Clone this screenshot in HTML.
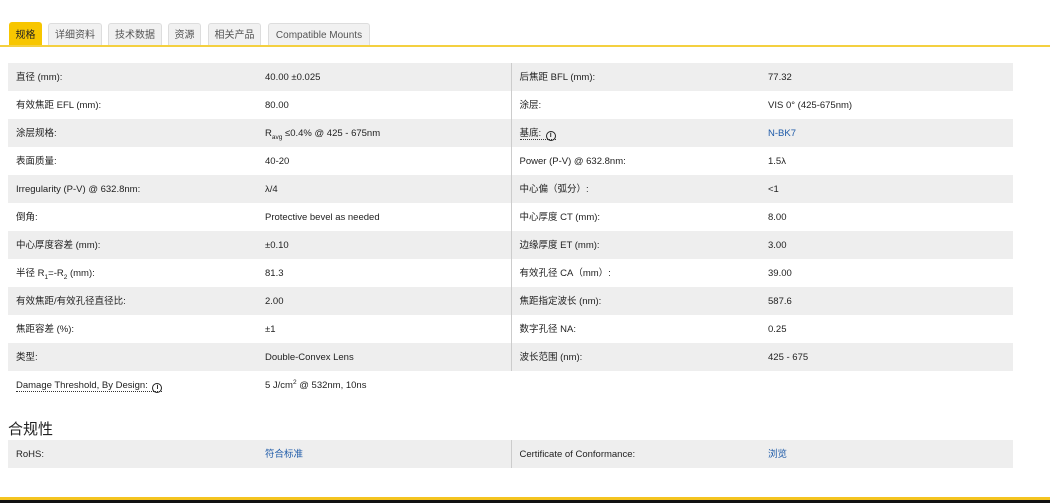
<!DOCTYPE html>
<html><head><meta charset="utf-8"><style>
*{margin:0;padding:0;box-sizing:border-box}
body{width:1050px;height:503px;background:#fff;font-family:"Liberation Sans","Noto Sans CJK SC",sans-serif;font-size:9.5px;color:#222;position:relative;overflow:hidden}
.tab{position:absolute;top:23px;height:23px;background:#f1f1f1;border:1px solid #ddd;border-bottom:none;border-radius:3px 3px 0 0;color:#555;font-size:10px;line-height:24px;text-align:center}
.tab.on{background:#f7c600;border-color:#f7c600;color:#222;top:22px;height:24px;line-height:25px}
.line{position:absolute;left:0;top:45px;width:1050px;height:2px;background:#f4d040}
table{position:absolute;left:8px;border-collapse:collapse;width:1005px;table-layout:fixed}
td{height:28px;padding-left:8px;padding-top:2px;vertical-align:middle;line-height:12px;white-space:nowrap}
tr.g td{background:#eee}
.c2{border-right:1px solid #ccc}
.lnk{color:#1d5aa8}
.u{border-bottom:1px dotted #333}
.i{display:inline-block;width:10px;height:10px;border:1.4px solid #222;border-radius:50%;font-size:7px;line-height:7px;text-align:center;font-weight:bold;vertical-align:-1px;margin-left:2px}
h3{position:absolute;left:8px;top:418px;font-size:15px;font-weight:normal;color:#222}
.bot{position:absolute;left:0;top:497px;width:1050px;height:3px;background:#f4c420}
.blk{position:absolute;left:0;top:500px;width:1050px;height:3px;background:#111}
sub,sup{font-size:6.5px;line-height:0}
</style></head><body>
<div class="tab on" style="left:9px;width:33px">规格</div>
<div class="tab" style="left:48px;width:54px">详细资料</div>
<div class="tab" style="left:108px;width:54px">技术数据</div>
<div class="tab" style="left:168px;width:33px">资源</div>
<div class="tab" style="left:208px;width:53px">相关产品</div>
<div class="tab" style="left:268px;width:102px">Compatible Mounts</div>
<div class="line"></div>
<table style="top:63px">
<colgroup><col style="width:249px"><col style="width:254px"><col style="width:249px"><col></colgroup>
<tr class="g"><td class="c1">直径 (mm):</td><td class="c2">40.00 ±0.025</td><td class="c3">后焦距 BFL (mm):</td><td>77.32</td></tr>
<tr><td class="c1">有效焦距 EFL (mm):</td><td class="c2">80.00</td><td class="c3">涂层:</td><td>VIS 0° (425-675nm)</td></tr>
<tr class="g"><td class="c1">涂层规格:</td><td class="c2">R<sub>avg</sub> ≤0.4% @ 425 - 675nm</td><td class="c3"><span class="u">基底: <span class="i">i</span></span></td><td class="lnk">N-BK7</td></tr>
<tr><td class="c1">表面质量:</td><td class="c2">40-20</td><td class="c3">Power (P-V) @ 632.8nm:</td><td>1.5λ</td></tr>
<tr class="g"><td class="c1">Irregularity (P-V) @ 632.8nm:</td><td class="c2">λ/4</td><td class="c3">中心偏（弧分）:</td><td>&lt;1</td></tr>
<tr><td class="c1">倒角:</td><td class="c2">Protective bevel as needed</td><td class="c3">中心厚度 CT (mm):</td><td>8.00</td></tr>
<tr class="g"><td class="c1">中心厚度容差 (mm):</td><td class="c2">±0.10</td><td class="c3">边缘厚度 ET (mm):</td><td>3.00</td></tr>
<tr><td class="c1">半径 R<sub>1</sub>=-R<sub>2</sub> (mm):</td><td class="c2">81.3</td><td class="c3">有效孔径 CA（mm）:</td><td>39.00</td></tr>
<tr class="g"><td class="c1">有效焦距/有效孔径直径比:</td><td class="c2">2.00</td><td class="c3">焦距指定波长 (nm):</td><td>587.6</td></tr>
<tr><td class="c1">焦距容差 (%):</td><td class="c2">±1</td><td class="c3">数字孔径 NA:</td><td>0.25</td></tr>
<tr class="g"><td class="c1">类型:</td><td class="c2">Double-Convex Lens</td><td class="c3">波长范围 (nm):</td><td>425 - 675</td></tr>
<tr><td class="c1"><span class="u">Damage Threshold, By Design: <span class="i">i</span></span></td><td class="c2" style="border-right:none">5 J/cm<sup>2</sup> @ 532nm, 10ns</td><td class="c3"></td><td></td></tr>
</table>
<h3>合规性</h3>
<table style="top:440px">
<colgroup><col style="width:249px"><col style="width:254px"><col style="width:249px"><col></colgroup>
<tr class="g"><td class="c1">RoHS:</td><td class="c2 lnk">符合标准</td><td class="c3">Certificate of Conformance:</td><td class="lnk">浏览</td></tr>
</table>
<div class="bot"></div><div class="blk"></div>
</body></html>
